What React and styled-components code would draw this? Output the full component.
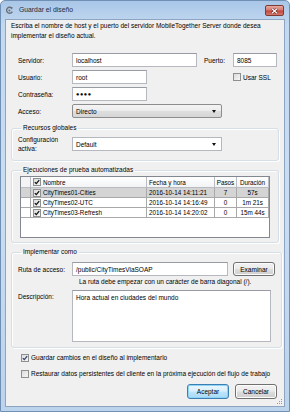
import React from 'react';
import styled, { createGlobalStyle } from 'styled-components';

const GlobalStyle = createGlobalStyle`
  html, body {
    margin: 0;
    padding: 0;
    background: #fff;
  }
  * {
    box-sizing: border-box;
  }
`;

const Window = styled.div`
  width: 290px;
  height: 412px;
  display: flex;
  flex-direction: column;
  background: linear-gradient(180deg, #a9c6e8 0%, #c3d9f0 6%, #c9ddf2 50%, #bcd3ec 100%);
  border: 1px solid #6f8fb5;
  border-radius: 5px 5px 0 0;
  font-family: 'Liberation Sans', Arial, sans-serif;
  font-size: 6.5px;
  color: #000;
`;

const TitleBar = styled.div`
  height: 18px;
  display: flex;
  align-items: flex-start;
  padding-left: 4px;
`;

const TitleText = styled.span`
  font-size: 6.8px;
  line-height: 10px;
  margin-top: 4px;
  margin-left: 5px;
  color: #1e2c3e;
`;

const AppIcon = styled.svg`
  margin-top: 5px;
  width: 9px;
  height: 9px;
`;

const CloseButton = styled.div`
  margin-left: auto;
  margin-right: 5px;
  margin-top: 4px;
  width: 19px;
  height: 11px;
  border: 1px solid #7d3b35;
  border-radius: 2px;
  background: linear-gradient(180deg, #e8a99f 0%, #d6796d 45%, #c2463a 55%, #d5786a 100%);
  display: flex;
  align-items: center;
  justify-content: center;
`;

const Body = styled.div`
  flex: 1;
  margin: 0 4px 4px 4px;
  background: #f0f0f0;
  border: 1px solid #8ea5c2;
  padding: 1px 5px 0 5px;
  display: flex;
  flex-direction: column;
  position: relative;
`;

const Intro = styled.p`
  margin: 0;
  line-height: 10px;
`;

const Row = styled.div`
  display: flex;
  align-items: ${p => (p.$top ? 'flex-start' : 'center')};
  margin-top: ${p => p.$mt ?? 3}px;
  padding-left: ${p => p.$pl ?? 7}px;
`;

const Label = styled.span`
  width: ${p => p.$w ?? 54}px;
  flex-shrink: 0;
  line-height: 9px;
  padding-top: ${p => p.$pt ?? 0}px;
`;

const TextBox = styled.div`
  width: ${p => p.$w}px;
  height: ${p => p.$h ?? 14}px;
  background: #fff;
  border: 1px solid #b5b8bf;
  border-top-color: #979ba3;
  padding: ${p => (p.$multi ? '2px 3px' : '0 3px')};
  display: flex;
  align-items: ${p => (p.$multi ? 'flex-start' : 'center')};
  line-height: 9px;
  font-size: ${p => (p.$dots ? '5.5px' : 'inherit')};
  letter-spacing: ${p => (p.$dots ? '0.6px' : 'normal')};
`;

const Combo = styled.div`
  width: ${p => p.$w}px;
  height: 14px;
  border: 1px solid ${p => (p.$plain ? '#b5b8bf' : '#8d8d8d')};
  border-radius: ${p => (p.$plain ? 0 : 2)}px;
  background: ${p =>
    p.$plain ? '#fff' : 'linear-gradient(180deg, #f4f4f4 0%, #ececec 48%, #dedede 52%, #d6d6d6 100%)'};
  display: flex;
  align-items: center;
  justify-content: space-between;
  padding: 0 5px 0 3px;
`;

const Arrow = styled.span`
  width: 0;
  height: 0;
  border-left: 2.5px solid transparent;
  border-right: 2.5px solid transparent;
  border-top: 3px solid #111;
`;

const Box = styled.span`
  width: 8px;
  height: 8px;
  flex-shrink: 0;
  border: 1px solid #8e8f8f;
  background: linear-gradient(135deg, #dcdcdc 0%, #f6f6f6 100%);
  display: inline-flex;
  align-items: center;
  justify-content: center;
  margin-right: ${p => p.$mr ?? 2}px;
`;

const Check = ({ checked, mr, color = '#34466b' }) => (
  <Box $mr={mr}>
    {checked && (
      <svg width="6" height="6" viewBox="0 0 6 6">
        <path d="M0.8 3.1 L2.3 4.6 L5.2 1.1" fill="none" stroke={color} strokeWidth="1.3" />
      </svg>
    )}
  </Box>
);

const Group = styled.fieldset`
  margin: ${p => p.$mt}px 0 0 0;
  padding: 0 6px ${p => p.$pb}px 6px;
  border: 1px solid #d5dfe5;
  border-radius: 3px;
  box-shadow: inset 1px 1px 0 #fff, 1px 1px 0 #fff;
`;

const Legend = styled.legend`
  margin-left: 3px;
  padding: 0 2px;
  line-height: 10px;
`;

const Table = styled.div`
  margin-top: 1px;
  margin-left: 2px;
  width: 250px;
  height: 62px;
  background: #fff;
  border: 1px solid #828790;
  font-size: 6.3px;
`;

const TRow = styled.div`
  display: grid;
  grid-template-columns: 10px 116px 68px 22px 32px;
  height: ${p => (p.$head ? 11 : 10)}px;
  background: ${p =>
    p.$head ? 'linear-gradient(180deg, #ffffff 0%, #f1f2f4 100%)' : p.$sel ? '#d4d4d4' : '#fff'};
`;

const Cell = styled.div`
  display: flex;
  align-items: center;
  justify-content: ${p => (p.$center ? 'center' : 'flex-start')};
  padding-left: ${p => (p.$center ? 0 : 2)}px;
  border-right: 1px solid ${p => (p.$head ? '#b9bcc2' : '#a9a9a9')};
  border-bottom: 1px solid ${p => (p.$head ? '#b9bcc2' : '#a9a9a9')};
  background: ${p => (p.$stub ? '#f4f4f4' : 'transparent')};
  white-space: nowrap;
  overflow: hidden;
`;

const Hint = styled.div`
  margin-left: 61px;
  line-height: 10px;
  margin-top: 1px;
`;

const Button = styled.div`
  width: 42px;
  height: ${p => p.$h ?? 15}px;
  display: flex;
  align-items: center;
  justify-content: center;
  border: 1px solid ${p => (p.$primary ? '#3c7fb1' : '#707070')};
  border-radius: 3px;
  background: ${p =>
    p.$primary
      ? 'linear-gradient(180deg, #eaf6fd 0%, #d9f0fc 48%, #bee6fd 52%, #a7d9f5 100%)'
      : 'linear-gradient(180deg, #f2f2f2 0%, #ebebeb 48%, #dddddd 52%, #cfcfcf 100%)'};
  box-shadow: inset 0 0 0 1px ${p => (p.$primary ? '#8fd3f6' : '#fcfcfc')};
  margin-left: ${p => p.$ml ?? 0}px;
`;

const OptionRow = styled.div`
  display: flex;
  align-items: center;
  line-height: 10px;
  padding-left: 10px;
  margin-top: ${p => p.$mt}px;
`;

const Footer = styled.div`
  display: flex;
  justify-content: flex-end;
  margin-top: 5px;
  margin-right: 2px;
`;

const Grip = styled.svg`
  position: absolute;
  right: 1px;
  bottom: 1px;
  width: 8px;
  height: 8px;
`;

const runs = [
  { name: 'CityTimes01-Cities', date: '2016-10-14 14:11:21', steps: '7', dur: '57s', sel: true },
  { name: 'CityTimes02-UTC', date: '2016-10-14 14:16:49', steps: '0', dur: '1m 21s' },
  { name: 'CityTimes03-Refresh', date: '2016-10-14 14:20:02', steps: '0', dur: '15m 44s' },
];

export default function App() {
  return (
    <>
      <GlobalStyle />
      <Window>
        <TitleBar>
          <AppIcon viewBox="0 0 9 9">
            <path
              d="M6.8 2.2 A3 3 0 1 0 7.3 5.6"
              fill="none"
              stroke="#6b6f75"
              strokeWidth="1.4"
            />
            <path d="M5.2 1 L8 1.6 L6.6 3.6 Z" fill="#6b6f75" />
            <circle cx="4.4" cy="4.6" r="1" fill="#6b6f75" />
          </AppIcon>
          <TitleText>Guardar el diseño</TitleText>
          <CloseButton>
            <svg width="7" height="6" viewBox="0 0 7 6">
              <path d="M1 0.8 L6 5.2 M6 0.8 L1 5.2" stroke="#5a1d18" strokeWidth="2.2" />
              <path d="M1 0.8 L6 5.2 M6 0.8 L1 5.2" stroke="#fff" strokeWidth="1.2" />
            </svg>
          </CloseButton>
        </TitleBar>

        <Body>
          <Intro>
            Escriba el nombre de host y el puerto del servidor MobileTogether Server donde desea
            <br />
            implementar el diseño actual.
          </Intro>

          <Row $mt={12}>
            <Label>Servidor:</Label>
            <TextBox $w={125}>localhost</TextBox>
            <Label $w={29} style={{ marginLeft: 7 }}>Puerto:</Label>
            <TextBox $w={44}>8085</TextBox>
          </Row>
          <Row>
            <Label>Usuario:</Label>
            <TextBox $w={75}>root</TextBox>
            <Row $mt={0} $pl={86}>
              <Check mr={2} />
              <span>Usar SSL</span>
            </Row>
          </Row>
          <Row>
            <Label>Contraseña:</Label>
            <TextBox $w={75} $dots>●●●●</TextBox>
          </Row>
          <Row>
            <Label>Acceso:</Label>
            <Combo $w={150}>
              <span>Directo</span>
              <Arrow />
            </Combo>
          </Row>

          <Group $mt={5} $pb={7}>
            <Legend>Recursos globales</Legend>
            <Row $mt={2} $pl={0}>
              <Label>
                Configuración
                <br />
                activa:
              </Label>
              <Combo $w={150} $plain>
                <span>Default</span>
                <Arrow />
              </Combo>
            </Row>
          </Group>

          <Group $mt={4} $pb={4}>
            <Legend>Ejecuciones de prueba automatizadas</Legend>
            <Table>
              <TRow $head>
                <Cell $head $stub />
                <Cell $head>
                  <Check checked mr={2} color="#111" />
                  Nombre
                </Cell>
                <Cell $head>Fecha y hora</Cell>
                <Cell $head $center>Pasos</Cell>
                <Cell $head $center>Duración</Cell>
              </TRow>
              {runs.map(r => (
                <TRow key={r.name} $sel={r.sel}>
                  <Cell />
                  <Cell>
                    <Check checked mr={2} color="#111" />
                    {r.name}
                  </Cell>
                  <Cell>{r.date}</Cell>
                  <Cell $center>{r.steps}</Cell>
                  <Cell $center>{r.dur}</Cell>
                </TRow>
              ))}
            </Table>
          </Group>

          <Group $mt={4} $pb={5}>
            <Legend>Implementar como</Legend>
            <Row $mt={5} $pl={0}>
              <Label>Ruta de acceso:</Label>
              <TextBox $w={156}>/public/CityTimesViaSOAP</TextBox>
              <Button $h={14} $ml={5}>Examinar</Button>
            </Row>
            <Hint>La ruta debe empezar con un carácter de barra diagonal (/).</Hint>
            <Row $mt={3} $pl={0} $top>
              <Label $pt={2}>Descripción:</Label>
              <TextBox $w={199} $h={52} $multi>Hora actual en ciudades del mundo</TextBox>
            </Row>
          </Group>

          <OptionRow $mt={5}>
            <Check checked mr={2} />
            Guardar cambios en el diseño al implementarlo
          </OptionRow>
          <OptionRow $mt={6}>
            <Check mr={2} />
            Restaurar datos persistentes del cliente en la próxima ejecución del flujo de trabajo
          </OptionRow>

          <Footer>
            <Button $primary>Aceptar</Button>
            <Button $ml={6}>Cancelar</Button>
          </Footer>

          <Grip viewBox="0 0 8 8">
            {[
              [6, 2],
              [6, 4],
              [4, 4],
              [6, 6],
              [4, 6],
              [2, 6],
            ].map(([x, y]) => (
              <rect key={`${x}-${y}`} x={x} y={y} width="1" height="1" fill="#9a9a9a" />
            ))}
          </Grip>
        </Body>
      </Window>
    </>
  );
}
